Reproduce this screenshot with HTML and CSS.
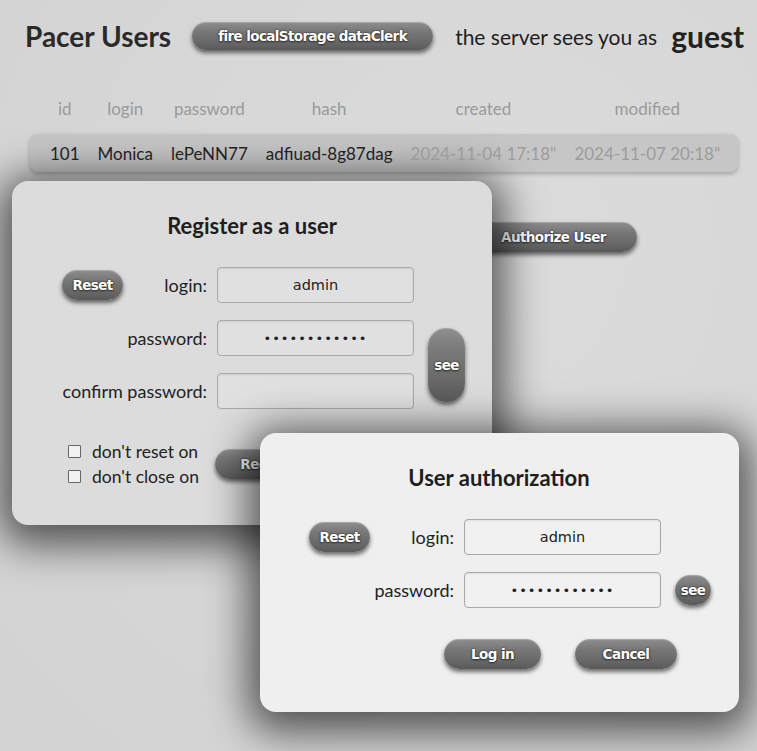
FILE: index.html
```html
<!DOCTYPE html>
<html lang="en">
<head>
<meta charset="utf-8">
<title>Pacer Users</title>
<link rel="stylesheet" href="styles.css">
</head>
<body>
<header class="top">
  <h1 class="title">Pacer Users</h1>
  <button class="btn btn-fire">fire localStorage dataClerk</button>
  <span class="seen">the server sees you as</span>
  <span class="who">guest</span>
</header>

<section class="users">
  <span class="th c1">id</span>
  <span class="th c2">login</span>
  <span class="th c3">password</span>
  <span class="th c4">hash</span>
  <span class="th c5">created</span>
  <span class="th c6">modified</span>
  <div class="rowbg"></div>
  <span class="td c1">101</span>
  <span class="td c2">Monica</span>
  <span class="td c3">lePeNN77</span>
  <span class="td c4">adfiuad-8g87dag</span>
  <span class="td c5 dim">2024-11-04 17:18"</span>
  <span class="td c6 dim">2024-11-07 20:18"</span>
</section>

<nav class="actions">
  <button class="btn btn-act">Authorize User</button>
</nav>

<div class="dialog dlg-register">
  <h2 class="dlg-title">Register as a user</h2>
  <div class="form">
    <div class="lab"><button class="btn btn-reset">Reset</button><span>login:</span></div>
    <div class="field">admin</div>
    <div class="lab"><span>password:</span></div>
    <div class="field dots">••••••••••••</div>
    <button class="btn btn-see tall">see</button>
    <div class="lab"><span>confirm password:</span></div>
    <div class="field"></div>
  </div>
  <div class="reg-foot">
    <div class="checks">
      <label class="chk"><span class="box"></span>don't reset on</label>
      <label class="chk"><span class="box"></span>don't close on</label>
    </div>
    <button class="btn btn-foot">Register</button>
  </div>
</div>

<div class="dialog dlg-auth">
  <h2 class="dlg-title">User authorization</h2>
  <div class="form">
    <div class="lab"><button class="btn btn-reset">Reset</button><span>login:</span></div>
    <div class="field">admin</div>
    <div class="lab"><span>password:</span></div>
    <div class="field dots">••••••••••••</div>
    <button class="btn btn-see small">see</button>
  </div>
  <div class="auth-foot">
    <button class="btn btn-login">Log in</button>
    <button class="btn btn-cancel">Cancel</button>
  </div>
</div>
</body>
</html>
```

FILE: styles.css
```css
html, body {
  margin: 0;
  padding: 0;
}
body {
  width: 757px;
  height: 751px;
  overflow: hidden;
  position: relative;
  background: radial-gradient(ellipse at 65% 35%, #dcdcdc 0%, #d6d6d6 60%, #d2d2d2 100%);
  font-family: Lato, "Open Sans", sans-serif;
  color: #222;
}

/* buttons */
.btn {
  border: none;
  height: 30px;
  border-radius: 15px;
  padding: 0 16px;
  font-family: "DejaVu Sans", Verdana, sans-serif;
  font-weight: bold;
  font-size: 13.5px;
  letter-spacing: -0.6px;
  color: #fff;
  text-shadow: 0 0 2px #222, 0 1px 2px #333;
  background: linear-gradient(#8e8e8e 0%, #777 35%, #676767 75%, #595959 100%);
  box-shadow: 0 3px 4px rgba(0, 0, 0, 0.55), inset 0 1px 1px rgba(255, 255, 255, 0.25);
  cursor: pointer;
}

/* header */
.top {
  display: flex;
  align-items: center;
  padding: 21px 0 0 25px;
  height: 30px;
}
.title {
  margin: 0;
  font-size: 28px;
  font-weight: 700;
  color: #2a2a2a;
}
.btn-fire {
  margin-left: 21px;
  width: 241px;
  height: 28px;
}
.seen {
  margin-left: 22px;
  font-size: 21px;
  color: #1e1e1e;
}
.who {
  margin-left: 14px;
  font-size: 30px;
  font-weight: 700;
  color: #222;
}

/* users table */
.users {
  display: grid;
  grid-template-columns: repeat(6, auto);
  grid-template-rows: 32px 38px;
  row-gap: 10px;
  justify-content: start;
  margin: 41px 0 0 30px;
  width: max-content;
  font-size: 17px;
}
.th, .td {
  padding: 0 9px;
  text-align: center;
  align-self: center;
  white-space: nowrap;
}
.th { grid-row: 1; color: #9a9a9a; }
.td { grid-row: 2; color: #222; position: relative; z-index: 1; }
.c1 { grid-column: 1; padding-left: 20px; }
.c2 { grid-column: 2; }
.c3 { grid-column: 3; }
.c4 { grid-column: 4; }
.c5 { grid-column: 5; }
.c6 { grid-column: 6; padding-right: 18px; }
.td.dim { color: #9c9c9c; }
.rowbg {
  grid-row: 2;
  grid-column: 1 / -1;
  border-radius: 8px;
  background: #c6c6c6;
  box-shadow: 0 2px 4px rgba(0, 0, 0, 0.25);
}

/* action buttons */
.actions {
  display: flex;
  margin: 50px 0 0 470px;
}
.btn-act {
  width: 167px;
}

/* dialogs (overlay) */
.dialog {
  position: absolute;
  box-sizing: border-box;
  border-radius: 16px;
  box-shadow: 0 8px 40px 12px rgba(0, 0, 0, 0.62);
  padding: 30px 0 0 50px;
}
.dlg-register {
  left: 12px;
  top: 181px;
  width: 480px;
  height: 344px;
  background: #dcdcdc;
}
.dlg-auth {
  left: 260px;
  top: 433px;
  width: 479px;
  height: 279px;
  background: #efefef;
  padding-left: 49px;
}
.dlg-title {
  margin: 0 0 0 -50px;
  text-align: center;
  font-size: 22px;
  font-weight: 700;
  line-height: 30px;
  color: #1e1e1e;
}
.form {
  display: grid;
  grid-template-columns: 145px 197px auto;
  grid-auto-rows: 36px;
  column-gap: 10px;
  row-gap: 17px;
  margin-top: 26px;
  align-items: center;
}
.lab {
  display: flex;
  align-items: center;
  justify-content: flex-end;
  white-space: nowrap;
  font-size: 18px;
  color: #222;
  grid-column: 1;
}
.lab .btn-reset {
  margin-right: auto;
}
.btn-reset {
  width: 61px;
  padding: 0;
}
.field {
  grid-column: 2;
  box-sizing: border-box;
  height: 36px;
  border: 1px solid #a9a9a9;
  border-radius: 4px;
  background: rgba(255, 255, 255, 0.12);
  box-shadow: inset 0 1px 2px rgba(0, 0, 0, 0.08);
  display: flex;
  align-items: center;
  justify-content: center;
  font-family: "DejaVu Sans", sans-serif;
  font-size: 14.5px;
  color: #222;
}
.field.dots {
  font-size: 13px;
  letter-spacing: 1px;
}
.btn-see {
  grid-column: 3;
  margin-left: 4px;
  padding: 0;
}
.btn-see.tall {
  grid-row: 2 / 4;
  width: 37px;
  height: 74px;
  border-radius: 18px;
  align-self: center;
}
.btn-see.small {
  grid-row: 2;
  width: 36px;
  height: 30px;
}

.reg-foot {
  display: flex;
  align-items: center;
  margin-top: 33px;
}
.checks {
  display: flex;
  flex-direction: column;
  gap: 6px;
  margin-left: 6px;
}
.chk {
  display: flex;
  align-items: center;
  gap: 11px;
  font-size: 17.5px;
  line-height: 19px;
}
.box {
  width: 11px;
  height: 11px;
  border: 1px solid #666;
  background: #f2f2f2;
  border-radius: 1px;
}
.btn-foot {
  margin-left: 16px;
  width: 110px;
}

.auth-foot {
  display: flex;
  gap: 34px;
  margin: 31px 0 0 135px;
}
.btn-login { width: 97px; }
.btn-cancel { width: 102px; }
```
